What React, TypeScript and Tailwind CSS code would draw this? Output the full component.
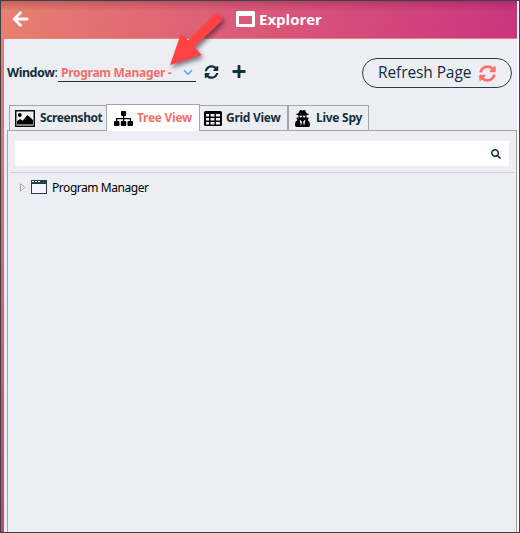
import React from "react";
import { FaArrowLeft, FaSyncAlt, FaPlus, FaUserSecret, FaSearch } from "react-icons/fa";

function PictureIcon() {
  return (
    <svg className="block h-[17px] w-5 shrink-0" viewBox="0 0 20 17">
      <rect x="0.75" y="0.75" width="18.5" height="15.5" fill="#f3f4f7" stroke="#000" strokeWidth="1.4" />
      <circle cx="4.8" cy="5" r="1.9" />
      <path d="M2 14.5v-3.3l3-2.2 2.6 1.8L12.500 5l5.500 5v4.500z" />
    </svg>
  );
}

function SitemapIcon() {
  return (
    <svg className="block h-[15px] w-[19px] shrink-0" viewBox="0 0 19 15">
      <rect x="7" width="5.200" height="5" rx="1" />
      <rect y="10" width="5.500" height="5" rx="1" />
      <rect x="6.800" y="10" width="5.500" height="5" rx="1" />
      <rect x="13.500" y="10" width="5.500" height="5" rx="1" />
      <path d="M9.600 4v7M2.700 11V7.700h13.700V11" fill="none" stroke="#000" strokeWidth="1.300" />
    </svg>
  );
}

function GridIcon() {
  return (
    <svg className="block h-[15px] w-[18px] shrink-0" viewBox="0 0 18 15">
      <rect width="18" height="15" rx="1.5" />
      <path
        fill="#f3f4f7"
        d="M2 3h3v2.500H2zM6.500 3h4v2.500h-4zM12 3h4v2.500h-4zM2 7h3v2.500H2zM6.500 7h4v2.500h-4zM12 7h4v2.500h-4zM2 11h3v2.500H2zM6.500 11h4v2.500h-4zM12 11h4v2.500h-4z"
      />
    </svg>
  );
}

function Header() {
  return (
    <header className="flex h-[38px] shrink-0 items-start border-b border-[#e98275] bg-[linear-gradient(180deg,rgba(70,0,40,0.22),transparent_10px),linear-gradient(100deg,#e8806f_0%,#dc5c78_45%,#cb3480_100%)] text-white">
      <FaArrowLeft className="mt-[9px] ml-[11px] h-[18px] w-[17px]" />
      <svg className="mt-[10px] ml-[207px] h-4 w-[19px]" viewBox="0 0 19 16">
        <path fill="#fff" fillRule="evenodd" d="M1.5 0h16Q19 0 19 1.5v13Q19 16 17.5 16h-16Q0 16 0 14.5v-13Q0 0 1.5 0zM3 5v8h13V5z" />
      </svg>
      <h1 className="mt-[8px] ml-[4px] font-['Open_Sans',sans-serif] text-[15px] leading-5 font-bold">Explorer</h1>
    </header>
  );
}

function Controls() {
  return (
    <div className="flex h-[65px] shrink-0 items-start pl-[3px] text-[#142f3b]">
      <span className="mt-[25px] w-[51px] text-[12.5px] leading-[18px] font-bold tracking-[-0.45px] whitespace-nowrap">
        Window<span className="font-normal">:</span>
      </span>
      <div className="mt-[25px] flex h-[18px] w-[138px] items-center border-b border-[#142f3b] pl-[3px] text-[12px] font-bold text-[#f46f6c]">
        <span className="w-[113px] tracking-[-0.28px] whitespace-nowrap">Program Manager -</span>
        <svg className="ml-[9px] h-[7px] w-[10px] shrink-0" viewBox="0 0 10 7">
          <path d="M1 1.2l4 4 4-4" fill="none" stroke="#45a8ee" strokeWidth="1.5" />
        </svg>
      </div>
      <FaSyncAlt className="mt-[26px] ml-[8px] h-[14px] w-[15px]" />
      <FaPlus className="mt-[25px] ml-[13px] h-[15px] w-[14px]" />
      <button className="mt-[19px] ml-[116px] flex h-[30px] w-[150px] shrink-0 items-center rounded-full border border-[#24404b] pl-[15px] font-['Open_Sans',sans-serif] text-[15.5px]">
        <span className="w-[101px] text-left tracking-[-0.1px] whitespace-nowrap">Refresh Page</span>
        <FaSyncAlt className="h-[17px] w-[17px] text-[#fa706c]" />
      </button>
    </div>
  );
}

function Tabs() {
  const base = "flex h-[25px] items-center border border-b-0 border-[#a2a4a8] whitespace-nowrap";
  return (
    <nav className="z-10 -mb-px flex h-[27px] shrink-0 items-end pb-px pl-[5px] text-[12px] font-bold tracking-[-0.27px] text-[#142f3b]">
      <div className={`${base} w-[97px] border-r-0 pl-[5px]`}>
        <PictureIcon />
        <span className="ml-[5px] tracking-[-0.42px]">Screenshot</span>
      </div>
      <div className={`${base} mb-[-1px] h-[27px] w-[94px] border-b bg-white pl-[7px] text-[#f46f6c]`}>
        <SitemapIcon />
        <span className="ml-[4px]">Tree View</span>
      </div>
      <div className={`${base} w-[88px] border-l-0 pl-[4px]`}>
        <GridIcon />
        <span className="ml-[4px]">Grid View</span>
      </div>
      <div className={`${base} w-[81px] pl-[6px]`}>
        <FaUserSecret className="h-[17px] w-[15px] shrink-0 text-black" />
        <span className="ml-[6px]">Live Spy</span>
      </div>
    </nav>
  );
}

function TreePanel() {
  return (
    <section className="ml-[3px] flex min-h-0 grow flex-col border border-b-0 border-[#a2a4a8]">
      <div className="mt-[10px] ml-[7px] flex h-[25px] w-[494px] shrink-0 items-center justify-end bg-white pr-[8px]">
        <FaSearch className="h-[10px] w-[10px] text-[#142f3b]" />
      </div>
      <div className="mt-[6px] mr-[2px] ml-[2px] border-t border-[#cdcfd4]" />
      <div className="mt-[5px] flex h-[19px] items-center pl-[12px] text-[12px] text-black">
        <svg className="mb-px h-[9px] w-[6px]" viewBox="0 0 6 9">
          <path d="M.5 .8v7.4l4.2-3.7z" fill="#fff" stroke="#a0a0a0" />
        </svg>
        <svg className="mb-px ml-[5px] h-[14px] w-4" viewBox="0 0 16 14">
          <rect x=".5" y=".5" width="15" height="13" fill="#f3f4f7" stroke="#263b4c" />
          <path fill="#263b4c" d="M0 0h16v4H0z" />
          <path fill="#fff" d="M1 1h2v1H1zM4 1h2v1H4zM7 1h2v1H7z" />
        </svg>
        <span className="ml-[5px] tracking-[-0.45px] whitespace-nowrap">Program Manager</span>
      </div>
    </section>
  );
}

export default function App() {
  return (
    <div className="relative flex h-[533px] w-[520px] flex-col overflow-hidden border border-[#414144] bg-[#edeef3] font-['Noto_Sans','Open_Sans',sans-serif]">
      <div className="flex min-h-0 grow">
        <div className="w-[3px] bg-[linear-gradient(180deg,#e8806f,#de6975_40%,#c94179)]" />
        <div className="flex w-[513px] flex-col">
          <div className="-ml-[3px] flex flex-col">
            <Header />
          </div>
          <Controls />
          <Tabs />
          <TreePanel />
        </div>
        <div className="w-[2px] bg-[#f8f8fa]" />
      </div>
      <svg className="pointer-events-none absolute top-0 left-[160px] h-[75px] w-[70px]" viewBox="161 1 70 75">
        <path
          d="M170 65L181 33.500l7 7L213.500 15.500a4.600 4.600 0 0 1 7.500 6L194.500 47l7 8z"
          fill="#ff4344"
          className="drop-shadow-[2px_3px_2px_rgba(40,30,50,0.55)]"
        />
      </svg>
    </div>
  );
}
